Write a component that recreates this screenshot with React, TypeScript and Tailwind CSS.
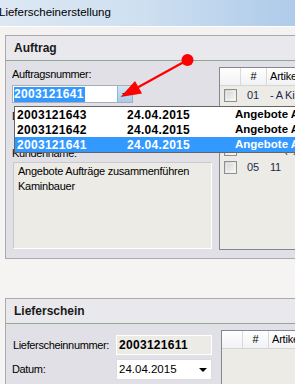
import React from "react";

function Check() {
  return (
    <div className="w-[13px] h-[13px] border border-[#8e8f8f] bg-linear-to-br from-[#cfd0d1] to-[#fbfbfb] p-px">
      <div className="w-full h-full border border-[#f4f4f4]/60" />
    </div>
  );
}

function Grid({ rows }: { rows: { n: string; t: string }[] }) {
  return (
    <div className="w-[100px] h-full border-l border-t border-b border-[#828790] bg-[#ecebe6] text-[11px] text-[#1c2c4c] tracking-[-0.2px]">
      <div className="flex h-[18px] bg-linear-to-b from-white to-[#f1f2f4] border-b border-[#d5d5d8] text-black">
        <div className="w-[21px] shrink-0 border-r border-[#d9d9dc]" />
        <div className="w-[26px] shrink-0 border-r border-[#d9d9dc] flex items-center justify-center">#</div>
        <div className="flex-1 flex items-center pl-[3px] whitespace-nowrap">Artikel</div>
      </div>
      {rows.map((r) => (
        <div key={r.n} className="flex h-[18px] items-center">
          <div className="w-[21px] shrink-0 pl-[4px] flex items-center">
            <Check />
          </div>
          <div className="w-[26px] shrink-0 pl-[6px]">{r.n}</div>
          <div className="flex-1 pl-[3px] whitespace-nowrap">{r.t}</div>
        </div>
      ))}
    </div>
  );
}

function PanelHeader({ title }: { title: string }) {
  return (
    <div className="h-[25px] flex items-center pl-[8px] bg-[#e9e9ed] border-b border-[#93a593] font-bold text-[12px] text-[#1a1a1a] tracking-[0px]">
      {title}
    </div>
  );
}

export default function App() {
  return (
    <div className="relative w-[295px] h-[384px] overflow-hidden bg-[#f5f4f2] text-black font-['Liberation_Sans',Arial,sans-serif] text-[11px] tracking-[-0.35px]">
      {/* title bar */}
      <div className="h-[26px] flex items-center bg-linear-to-r from-[#dde8f4] via-[#cddff0] to-[#aecbea] text-[11.5px] tracking-[0px] -ml-[1px]">
        Lieferscheinerstellung
      </div>
      <div className="h-[9px] bg-[#f3f2f0] border-t border-white" />

      {/* Auftrag panel */}
      <div className="ml-[5px] border-l border-t border-b border-[#a9a9ae]">
        <PanelHeader title="Auftrag" />
        <div className="h-[197px] bg-[#e0e0e6] flex pl-[6px] pb-[8px] gap-[7px]">
          <div className="w-[200px] shrink-0 flex flex-col">
            <div className="mt-[7px] h-[13px] leading-[13px]">Auftragsnummer:</div>
            <div className="mt-[4px] relative w-[121px] h-[18px] border border-[#abadb3] bg-white flex items-center pl-px">
              <span className="h-[15px] leading-[15px] bg-[#3399ff] text-white font-bold text-[12px] tracking-[0.3px] pr-[1px]">
                2003121641
              </span>
              <div className="absolute right-0 top-0 w-[15px] h-[16px] bg-linear-to-b from-[#d0e6f6] to-[#a7cce8] border-l border-[#8fb5d4] flex items-center justify-center">
                <div className="w-0 h-0 border-l-[3px] border-r-[3px] border-t-[3px] border-l-transparent border-r-transparent border-t-[#222]" />
              </div>
            </div>
            <div className="mt-[4px] h-[18px] flex items-center">Datum:</div>
            <div className="mt-[22px] h-[13px] leading-[13px]">Kundenname:</div>
            <div className="mt-[2px] ml-px h-[87px] border border-white border-l-[#c9c9cd] border-t-[#c9c9cd] bg-[#ecebe6] pl-[4px] pt-[1px] leading-[15px] tracking-[-0.25px] whitespace-nowrap">
              <div>Angebote Aufträge zusammenführen</div>
              <div>Kaminbauer</div>
            </div>
          </div>
          <div className="mt-[6px] h-[183px] shrink-0">
            <Grid
              rows={[
                { n: "01", t: "- A Kiste" },
                { n: "02", t: "- A Kiste" },
                { n: "03", t: "- A Kiste" },
                { n: "04", t: "11 (1)" },
                { n: "05", t: "11" },
              ]}
            />
          </div>
        </div>
      </div>

      {/* Lieferschein panel */}
      <div className="mt-[39px] ml-[5px] border-l border-t border-[#a9a9ae]">
        <PanelHeader title="Lieferschein" />
        <div className="h-[80px] bg-[#e0e0e6] flex pl-[6px] gap-[9px]">
          <div className="w-[200px] shrink-0 flex flex-col">
            <div className="mt-[11px] h-[20px] flex items-center">
              <div className="w-[104px] shrink-0 pl-[1px] whitespace-nowrap">Lieferscheinnummer:</div>
              <div className="w-[96px] shrink-0 h-[20px] bg-[#ecebe6] border border-white flex items-center pl-[2px] font-bold text-[12px] tracking-[0.3px]">
                2003121611
              </div>
            </div>
            <div className="mt-[4px] h-[21px] flex items-center">
              <div className="w-[104px] shrink-0">Datum:</div>
              <div className="w-[96px] shrink-0 h-[21px] bg-white border border-[#dcdce0] flex items-center justify-between pl-[2px] pr-[4px] text-[11.5px] tracking-[0px]">
                <span>24.04.2015</span>
                <div className="w-0 h-0 border-l-[4px] border-r-[4px] border-t-[4px] border-l-transparent border-r-transparent border-t-black" />
              </div>
            </div>
          </div>
          <div className="mt-[6px] h-[80px] shrink-0">
            <Grid rows={[]} />
          </div>
        </div>
      </div>

      {/* dropdown list overlay */}
      <div className="absolute left-[14px] top-[106px] w-[300px] border border-[#646464] bg-white font-bold text-[12px] tracking-[0.3px]">
        {[
          { n: "2003121643", sel: false },
          { n: "2003121642", sel: false },
          { n: "2003121641", sel: true },
        ].map((r) => (
          <div
            key={r.n}
            className={
              "h-[15px] flex items-center whitespace-nowrap " +
              (r.sel ? "bg-[#3399ff] text-white" : "text-black")
            }
          >
            <span className="w-[112px] shrink-0 pl-[2px]">{r.n}</span>
            <span className="w-[108px] shrink-0">24.04.2015</span>
            <span className="shrink-0 text-[11.5px] tracking-[0px]">Angebote Aufträge</span>
          </div>
        ))}
      </div>

      {/* red annotation arrow */}
      <svg className="absolute inset-0 pointer-events-none" width="295" height="384" viewBox="0 0 295 384">
        <line x1="187.5" y1="60" x2="134" y2="89.5" stroke="#ff0000" strokeWidth="2.2" />
        <polygon points="120.5,97 135,81 142,93.5" fill="#ff0000" />
        <circle cx="187.5" cy="60" r="6" fill="#ff0000" />
      </svg>
    </div>
  );
}
